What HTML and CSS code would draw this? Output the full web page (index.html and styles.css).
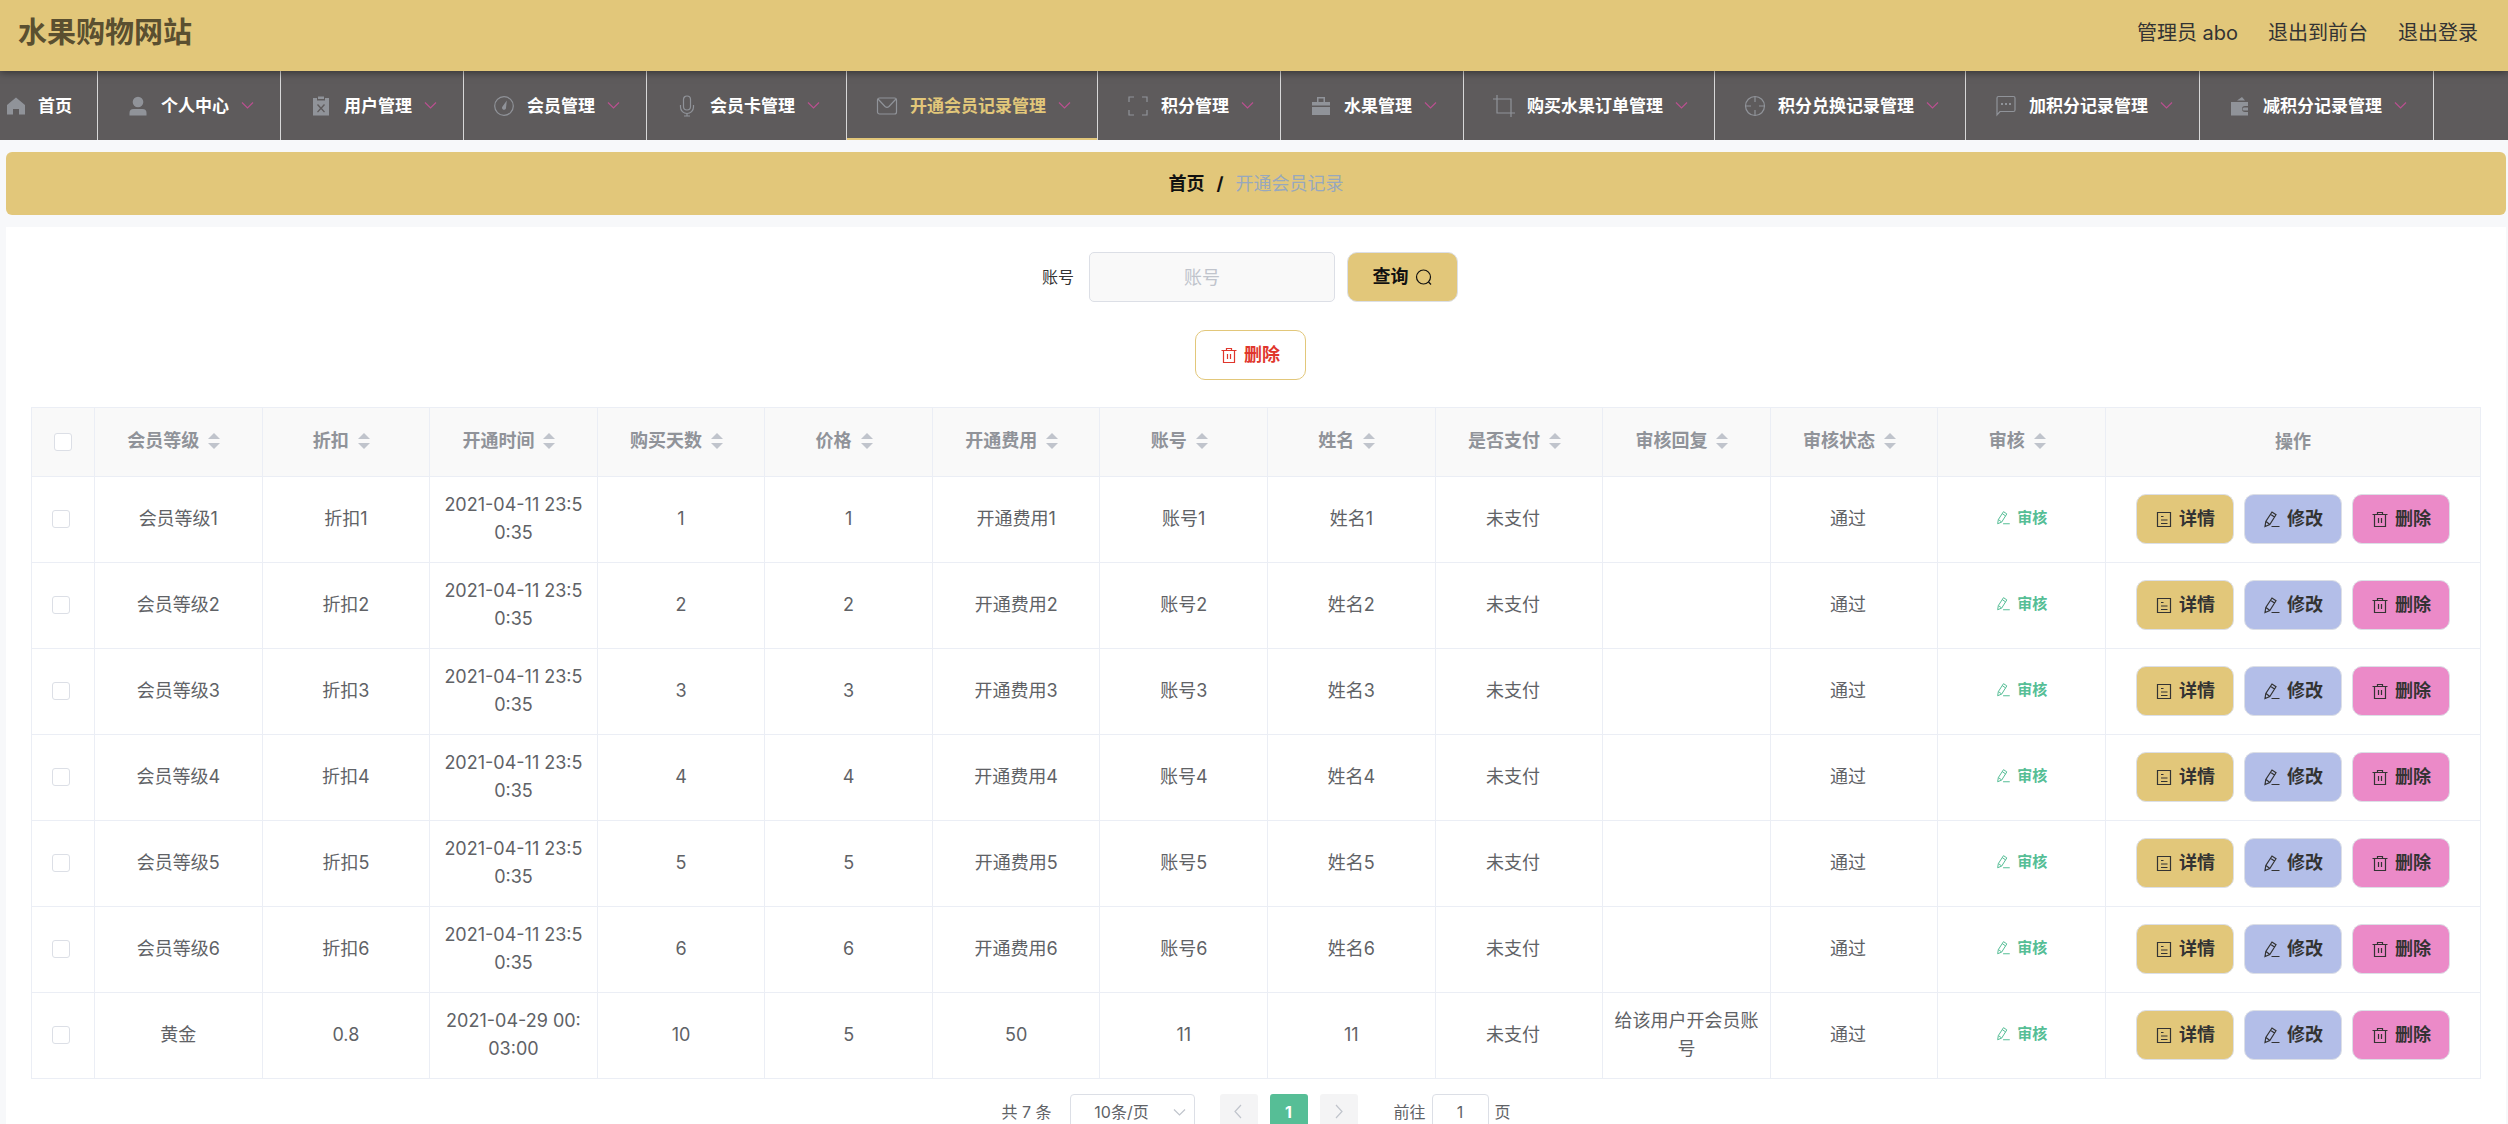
FILE: index.html
```html
<!DOCTYPE html>
<html lang="zh-CN">
<head>
<meta charset="utf-8">
<title>水果购物网站</title>
<link rel="stylesheet" href="styles.css">
</head>
<body>
<svg class="sprite" aria-hidden="true">
  <symbol id="i-home" viewBox="0 0 18 22"><path class="solid" d="M9 2.500 18 10v9.500h-6V14H6v5.500H0V10Z"/></symbol>
  <symbol id="i-user" viewBox="0 0 22 22"><circle class="solid" cx="11" cy="7" r="5.300"/><path class="solid" d="M2.500 20.500V18q0-4 4-4h9q4 0 4 4v2.500Z"/></symbol>
  <symbol id="i-down" viewBox="0 0 15 15"><path class="line" d="m2 4.500 5.500 5.500L13 4.500"/></symbol>
  <symbol id="i-left" viewBox="0 0 15 15"><path class="line" d="M10 1 4 7.500l6 6.500"/></symbol>
  <symbol id="i-right" viewBox="0 0 15 15"><path class="line" d="m5 1 6 6.500L5 14"/></symbol>
  <symbol id="i-clip" viewBox="0 0 22 22"><path class="solid" fill-rule="evenodd" d="M3 3h4v2.500h8V3h4v17.500H3ZM8 9l3 3.300L14 9l1 .9-3 3.400 3 3.400-1 .9-3-3.300-3 3.300-1-.9 3-3.400-3-3.400ZM8 1.500h6V4H8Z"/></symbol>
  <symbol id="i-odo" viewBox="0 0 22 22"><circle class="line" cx="11" cy="11" r="9.300"/><path class="solid" d="M13.800 5.500 13 13a2 2 0 1 1-3.500-1.500Z"/></symbol>
  <symbol id="i-mic" viewBox="0 0 22 22"><rect class="line" x="7.500" y="1" width="7" height="14" rx="3.500"/><path class="line" d="M4.500 10v2a6.500 6.500 0 0 0 13 0v-2M11 18.500V21M8 21h6"/></symbol>
  <symbol id="i-mail" viewBox="0 0 22 22"><rect class="line" x="1.500" y="3" width="19" height="16" rx="2"/><path class="line" d="m2 4 7 7.500q2 1.600 4 0L20 4"/></symbol>
  <symbol id="i-full" viewBox="0 0 22 22"><path class="line" d="M2 7V2h5M15 2h5v5M20 15v5h-5M7 20H2v-5"/></symbol>
  <symbol id="i-case" viewBox="0 0 22 22"><path class="solid" fill-rule="evenodd" d="M2 7h5V2h8v5h5v3.500H2Zm6.500 0h5V3.500h-5ZM2 12h18v8H2Z"/></symbol>
  <symbol id="i-crop" viewBox="0 0 22 22"><path class="line" d="M4 0v18h18M0 4h18v18"/></symbol>
  <symbol id="i-aim" viewBox="0 0 22 22"><circle class="line" cx="11" cy="11" r="9.500"/><path class="line" d="M11 1.500V7M11 15v5.500M1.500 11H7M15 11h5.500"/></symbol>
  <symbol id="i-chat" viewBox="0 0 22 22"><path class="line" d="M2 20V3q0-1.500 1.500-1.500h15Q20 1.500 20 3v12q0 1.500-1.500 1.500H5Z"/><path class="solid" d="M6 8h2v2H6ZM10 8h2v2h-2ZM14 8h2v2h-2Z"/></symbol>
  <symbol id="i-wallet" viewBox="0 0 22 22"><path class="solid" fill-rule="evenodd" d="M8 5.500 13 2l3 3.500ZM2 7h17v4h-3a3 3 0 0 0 0 6h3v3.500H2ZM15 12.500h4v3h-4a1.500 1.500 0 0 1 0-3Z"/></symbol>
  <symbol id="i-search" viewBox="0 0 18 18"><circle class="line" cx="8.500" cy="9" r="7"/><path class="line" d="m13.500 14 2.500 2.500"/></symbol>
  <symbol id="i-trash" viewBox="0 0 18 18"><path class="line" d="M1.500 4.500h15M3.500 4.500v12h11v-12M6.500 4.500v-2h5v2M7.500 8v5M10.500 8v5"/></symbol>
  <symbol id="i-doc" viewBox="0 0 18 18"><path class="line" d="M2.500 2.500h13v14h-13ZM6 6.500h2.500M6 10h6.500M6 13.500h6.500"/></symbol>
  <symbol id="i-edit" viewBox="0 0 18 18"><path class="line" d="m2 16.500.8-5L9 2l4 2.700L6.800 14.500ZM7.500 4.300l4 2.800M3 11.500l3.500 2.700M8.500 16.500h8"/></symbol>
</svg>

<header class="topbar">
  <h1 class="site-title">水果购物网站</h1>
  <div class="account">
    <span>管理员 abo</span>
    <a href="#">退出到前台</a>
    <a href="#">退出登录</a>
  </div>
</header>

<nav class="menu" id="menu">
  <a class="menu-item menu-home" href="#"><svg class="home-icon"><use href="#i-home"/></svg><span>首页</span></a>
</nav>

<main class="main">
  <div class="breadcrumb"><a href="#">首页</a><b>/</b><span>开通会员记录</span></div>
  <section class="panel">
    <form class="search">
      <label for="account">账号</label>
      <input class="field" id="account" type="text" placeholder="账号">
      <button class="btn btn-gold btn-wide" type="button">查询<svg class="icon"><use href="#i-search"/></svg></button>
    </form>
    <div class="tools">
      <button class="btn btn-outline btn-wide" type="button"><svg class="icon"><use href="#i-trash"/></svg>删除</button>
    </div>
    <table class="grid">
      <colgroup><col class="col-check"><col span="12"><col class="col-actions"></colgroup>
      <thead><tr id="head"><th><input type="checkbox" aria-label="全选"></th></tr></thead>
      <tbody id="rows"></tbody>
    </table>
    <div class="pager">
      <span class="total">共 7 条</span>
      <span class="size"><select aria-label="每页条数"><option>10条/页</option></select><svg class="arrow"><use href="#i-down"/></svg></span>
      <button class="page" type="button" aria-label="上一页" disabled><svg class="arrow"><use href="#i-left"/></svg></button>
      <button class="page page-current" type="button">1</button>
      <button class="page" type="button" aria-label="下一页" disabled><svg class="arrow"><use href="#i-right"/></svg></button>
      <label class="jump">前往<input type="text" value="1">页</label>
    </div>
  </section>
</main>
<script src="app.js"></script>
</body>
</html>
```
FILE: styles.css
```css
* { box-sizing: border-box; }

body {
  margin: 0;
  background: #f7f8fa;
  color: #606266;
  font: 18px/28px Inter, "Noto Sans CJK SC", sans-serif;
}

a { color: inherit; text-decoration: none; }
button, input, select { font: inherit; color: inherit; margin: 0; }
.sprite { display: none; }
.solid { fill: currentColor; }
.line { fill: none; stroke: currentColor; stroke-width: 1.2; }

.topbar {
  position: relative;
  display: flex;
  align-items: center;
  justify-content: space-between;
  height: 71px;
  padding: 0 30px 5px 18px;
  background: #e2c77a;
  box-shadow: 0 1px 8px rgba(0, 0, 0, 0.5);
}
.site-title { margin: 0; color: #5a4f30; font-size: 29px; line-height: 40px; }
.account { display: flex; gap: 30px; color: #333; font-size: 20px; }

.menu { display: flex; height: 69px; background: #5e5b5c; overflow: hidden; }
.menu-item {
  flex: none;
  display: flex;
  align-items: center;
  padding: 0 25px 0 29px;
  border-right: 1px solid #d8d8d8;
  color: #fff;
  font-size: 17px;
  font-weight: 700;
}
.menu-home { padding: 0 25px 0 7px; gap: 13px; }
.menu-item svg { color: #909399; }
.home-icon { width: 18px; height: 22px; }
.menu-icon { width: 22px; height: 22px; margin-right: 12px; }
.menu-item .menu-arrow { width: 15px; height: 15px; margin-left: 11px; color: #b9508f; }
.menu-active { color: #e2c77a; box-shadow: inset 0 -2px #e2c77a; }

.main { padding: 12px 2px 0 6px; }
.breadcrumb {
  display: flex;
  align-items: center;
  justify-content: center;
  gap: 12px;
  height: 63px;
  margin-bottom: 12px;
  border-radius: 6px;
  background: #e2c77a;
  color: #97a8be;
}
.breadcrumb a, .breadcrumb b { color: #111; font-weight: 700; }

.panel { padding: 25px; background: #fff; }
.search, .tools { display: flex; justify-content: center; align-items: center; padding-right: 12px; }
.search { gap: 12px; margin-bottom: 28px; }
.search label { color: #333; font-size: 16px; padding-right: 3px; }
.field {
  width: 246px;
  height: 50px;
  padding: 0 38px 0 18px;
  border: 1px solid #dcdfe6;
  border-radius: 5px;
  background: #f9f9f9;
  text-align: center;
}
.field::placeholder { color: #c0c4cc; }

.btn {
  display: inline-flex;
  align-items: center;
  justify-content: center;
  gap: 6px;
  width: 98px;
  height: 50px;
  padding: 0;
  border: 1px solid #dcdfe6;
  border-radius: 10px;
  color: #333;
  font-weight: 700;
}
.btn-wide { width: 111px; }
.btn-gold { background: #e2c77a; }
.btn-blue { background: #b3bee8; }
.btn-pink { background: #eb8ac8; }
.search .btn { color: #111; }
.btn-outline { border-color: #e2c77a; background: #fff; color: #e0362c; }
.icon { width: 18px; height: 18px; }

.grid {
  width: 100%;
  margin-top: 27px;
  table-layout: fixed;
  border-spacing: 0;
  border: solid #ebeef5;
  border-width: 1px 0 0 1px;
}
.col-check { width: 63px; }
.col-actions { width: 375px; }
.grid th, .grid td {
  border: solid #ebeef5;
  border-width: 0 1px 1px 0;
  text-align: center;
  word-break: break-all;
}
.grid th { height: 69px; padding: 0; background: #f9f9f9; color: #909399; font-weight: 700; }
.grid td { height: 86px; padding: 13px 11px 15px; }
.grid input {
  appearance: none;
  display: block;
  width: 18px;
  height: 18px;
  margin: 0 auto;
  border: 1px solid #dcdfe6;
  border-radius: 3px;
  background: #fff;
}
.grid td:first-child { padding: 0 5px 2px 0; }
.sort { display: flex; justify-content: center; align-items: center; padding-bottom: 2px; }
.carets { display: grid; justify-items: center; gap: 4px; width: 30px; }
.carets::before, .carets::after { content: ""; border: solid transparent; border-width: 0 6px 6px; border-bottom-color: #c0c4cc; }
.carets::after { border-width: 6px 6px 0; border-top-color: #c0c4cc; }
.status { margin-right: 12px; }
.actions { display: flex; justify-content: center; gap: 10px; }
.review {
  display: inline-flex;
  align-items: center;
  gap: 6px;
  padding: 0;
  border: 0;
  background: none;
  color: #56be96;
  font-size: 15px;
  font-weight: 700;
}
.review .icon { width: 15px; height: 15px; }

.pager {
  display: flex;
  justify-content: center;
  align-items: center;
  gap: 12px;
  margin-top: 15px;
  font-size: 16px;
}
.total { margin-right: 6px; }
.size { position: relative; margin-right: 13px; }
.size select {
  appearance: none;
  display: block;
  width: 125px;
  height: 35px;
  padding: 0 31px 0 10px;
  border: 1px solid #dcdfe6;
  border-radius: 4px;
  background: #fff;
  text-align: center;
  text-align-last: center;
}
.arrow { display: block; width: 15px; height: 15px; color: #c0c4cc; }
.size .arrow { position: absolute; right: 8px; top: 11px; }
.page {
  display: grid;
  place-items: center;
  width: 38px;
  height: 35px;
  padding: 0;
  border: 0;
  border-radius: 3px;
  background: #f4f4f5;
}
.page-current { background: #56be96; color: #fff; font-weight: 700; }
.jump { display: flex; align-items: center; gap: 6px; margin-left: 24px; }
.jump input { width: 57px; height: 35px; border: 1px solid #dcdfe6; border-radius: 4px; text-align: center; }
```
FILE: app.js
```js
const icon = (name, cls) => `<svg class="${cls}"><use href="#i-${name}"/></svg>`;

const menu = [
  ["user", "个人中心"], ["clip", "用户管理"], ["odo", "会员管理"], ["mic", "会员卡管理"],
  ["mail", "开通会员记录管理"], ["full", "积分管理"], ["case", "水果管理"],
  ["crop", "购买水果订单管理"], ["aim", "积分兑换记录管理"], ["chat", "加积分记录管理"],
  ["wallet", "减积分记录管理"]
];
document.getElementById("menu").insertAdjacentHTML("beforeend", menu.map(([name, text]) =>
  `<a class="menu-item${name === "mail" ? " menu-active" : ""}" href="#">${icon(name, "menu-icon")}<span>${text}</span>${icon("down", "menu-arrow")}</a>`
).join(""));

const columns = ["会员等级", "折扣", "开通时间", "购买天数", "价格", "开通费用", "账号", "姓名", "是否支付", "审核回复", "审核状态", "审核"];
document.getElementById("head").insertAdjacentHTML("beforeend",
  columns.map(text => `<th><div class="sort">${text}<span class="carets"></span></div></th>`).join("") + "<th>操作</th>");

const status = text => `<span class="status">${text}</span>`;
const records = [1, 2, 3, 4, 5, 6].map(n => [
  `会员等级${n}`, `折扣${n}`, "2021-04-11 23:50:35", n, n, `开通费用${n}`, `账号${n}`, `姓名${n}`, status("未支付"), "", status("通过")
]);
records.push(["黄金", "0.8", "2021-04-29 00:03:00", 10, 5, 50, 11, 11, status("未支付"), "给该用户开会员账号", status("通过")]);

const review = `<td><button class="review" type="button">${icon("edit", "icon")}审核</button></td>`;
const actions = `<td><div class="actions">
  <button class="btn btn-gold" type="button">${icon("doc", "icon")}详情</button>
  <button class="btn btn-blue" type="button">${icon("edit", "icon")}修改</button>
  <button class="btn btn-pink" type="button">${icon("trash", "icon")}删除</button>
</div></td>`;
document.getElementById("rows").innerHTML = records.map(record =>
  `<tr><td><input type="checkbox" aria-label="选择"></td>${record.map(v => `<td>${v}</td>`).join("")}${review}${actions}</tr>`
).join("");
```
